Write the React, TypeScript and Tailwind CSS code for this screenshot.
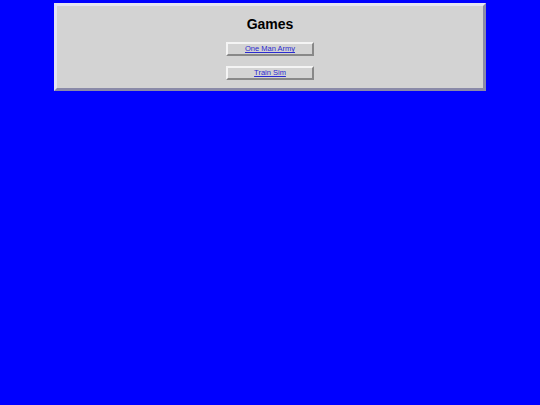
export default function App() {
  const games = ["One Man Army", "Train Sim"];
  return (
    <div className="h-[405px] bg-[#0000ff] pt-[3px] font-['Liberation_Sans',sans-serif]">
      <div className="mx-auto flex w-[432px] flex-col items-center border-[3px] border-t-[#e4e4f2] border-l-[#e4e4f2] border-b-[#8a8aa8] border-r-[#8a8aa8] bg-[#d3d3d3] pt-[9px] pb-[8px]">
        <h1 className="text-[14px] font-bold leading-[19px] text-black">Games</h1>
        <div className="mt-[8px] flex flex-col gap-[10px]">
          {games.map((g) => (
            <div
              key={g}
              className="flex h-[14px] w-[88px] items-center justify-center border-2 border-t-[#f4f4f4] border-l-[#f4f4f4] border-b-[#888] border-r-[#888] bg-[#d3d3d3]"
            >
              <a href="#" className="text-[7.5px] leading-none text-[#2a2ad0] underline">
                {g}
              </a>
            </div>
          ))}
        </div>
      </div>
    </div>
  );
}
